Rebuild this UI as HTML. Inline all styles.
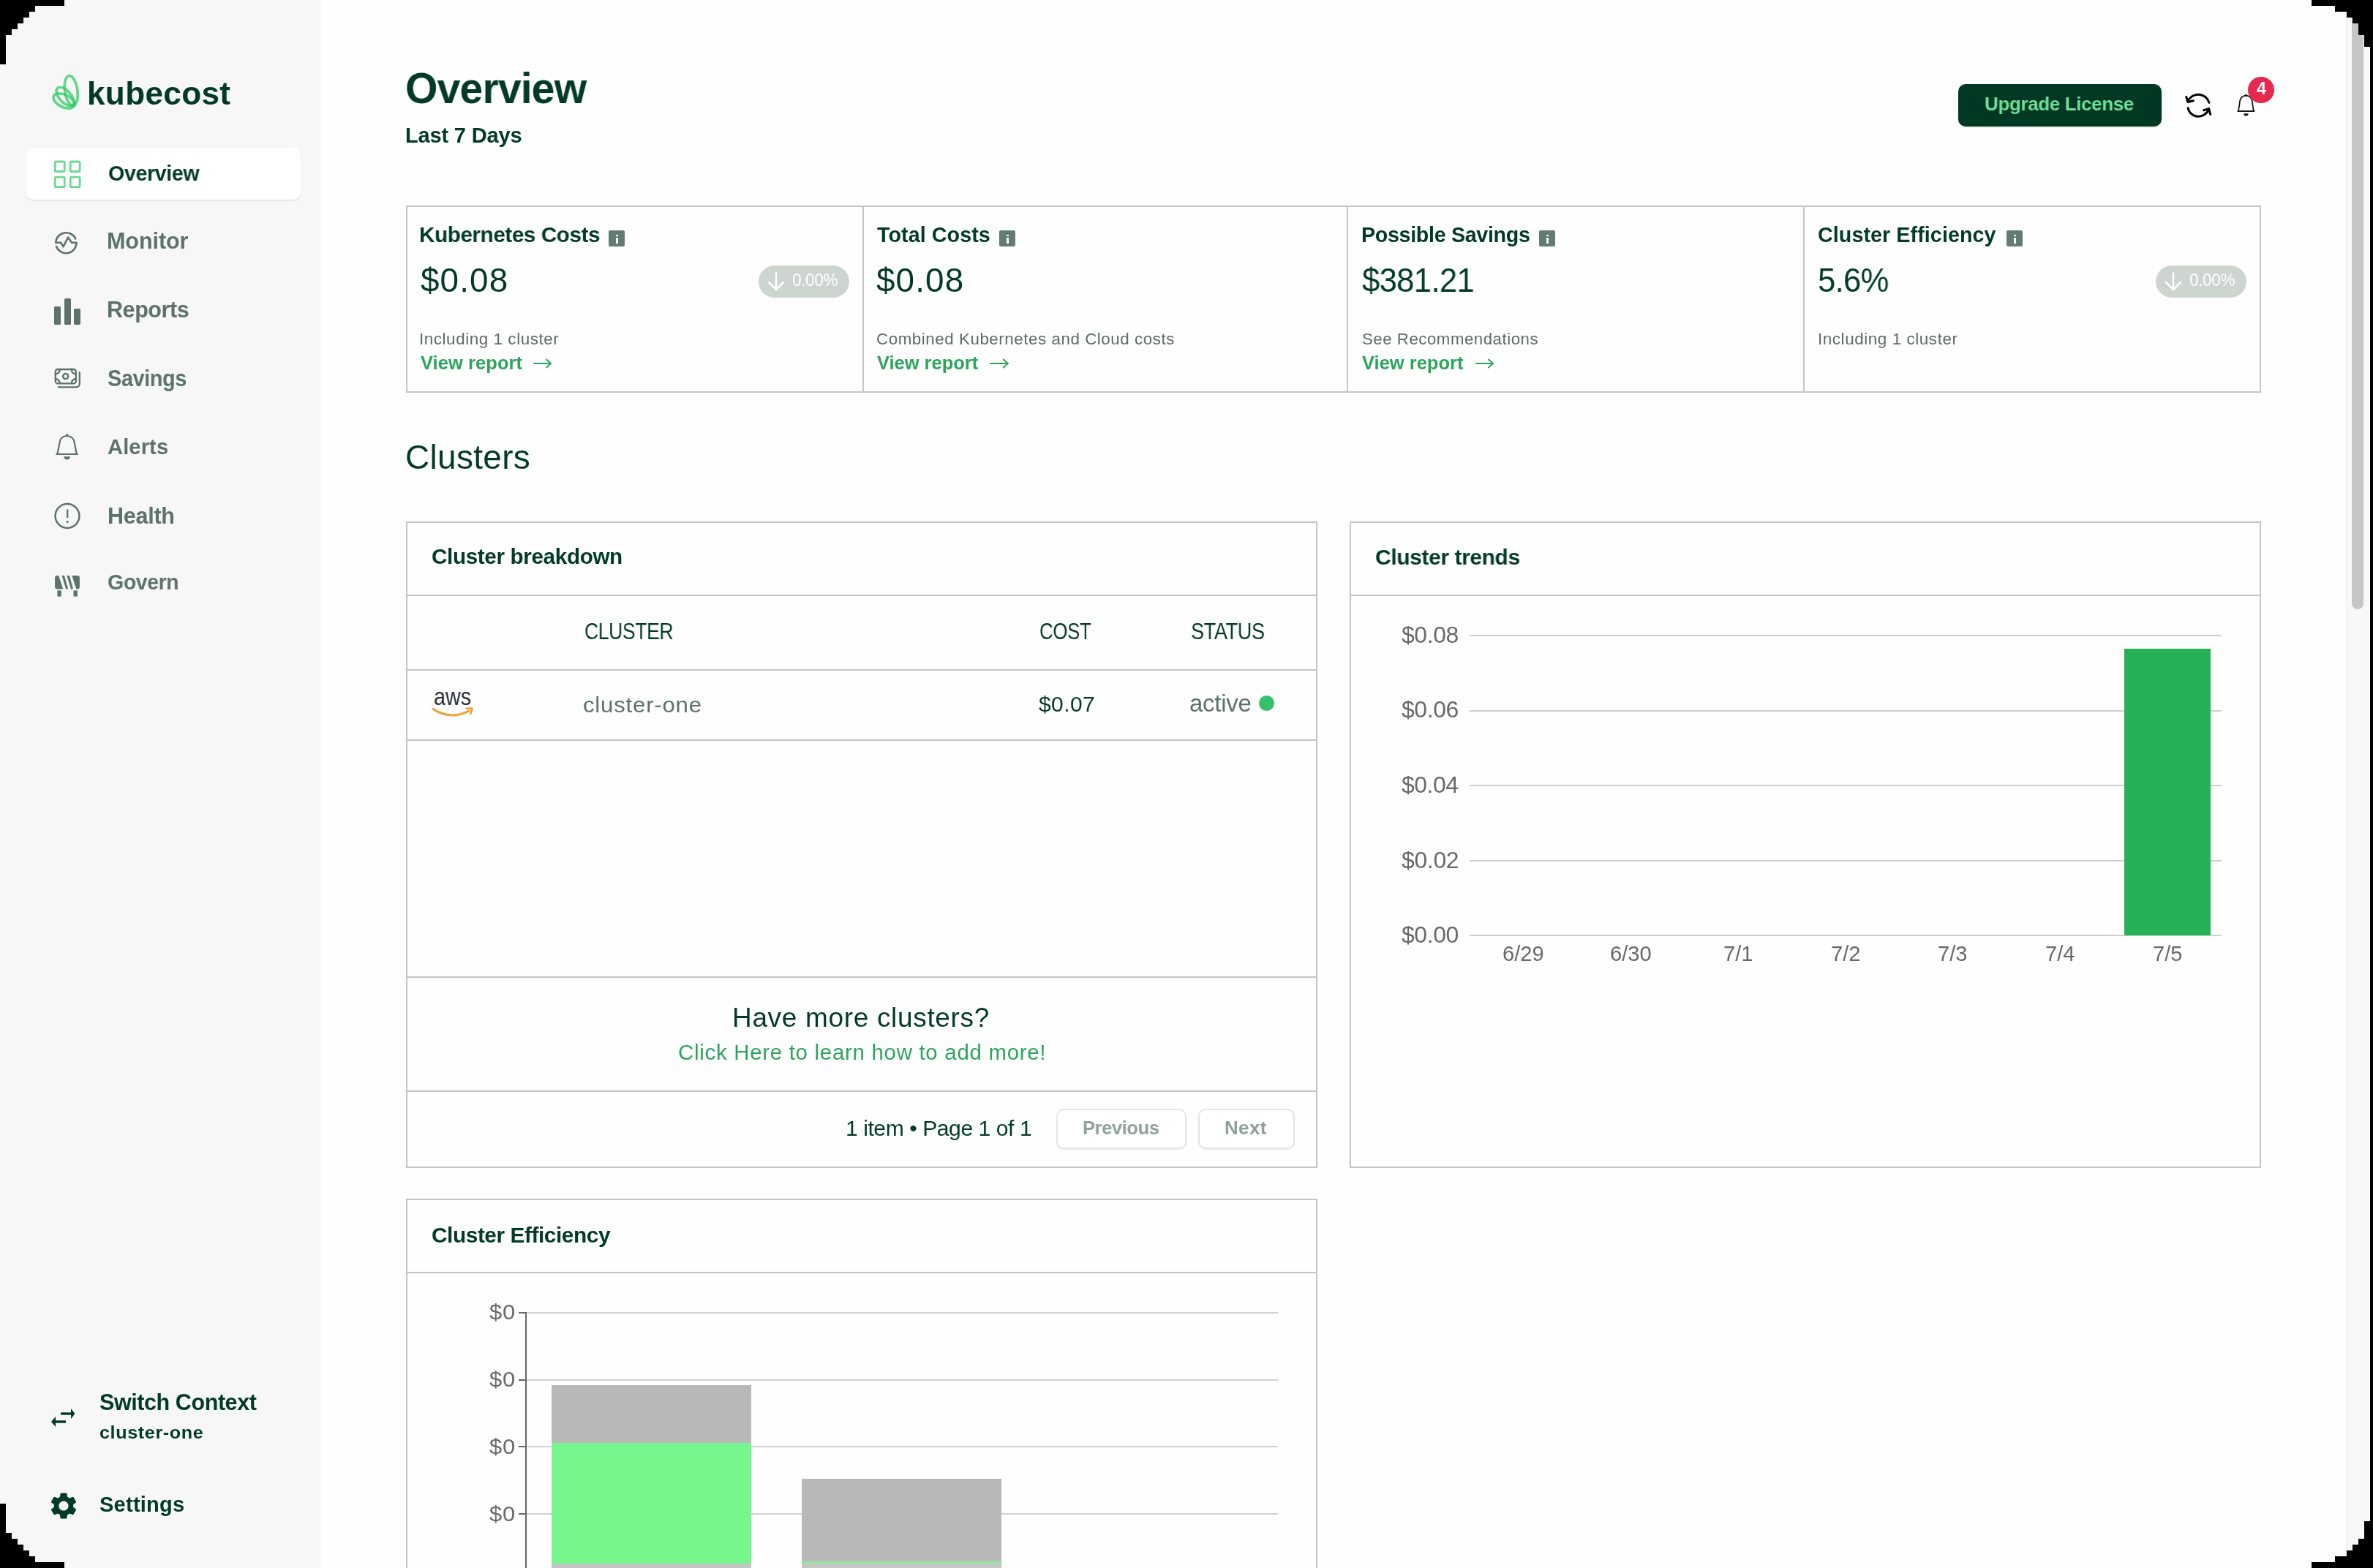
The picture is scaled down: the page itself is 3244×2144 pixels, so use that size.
<!DOCTYPE html>
<html><head><meta charset="utf-8"><title>Kubecost Overview</title>
<style>
html,body{margin:0;padding:0;}
body{width:3244px;height:2144px;position:relative;overflow:hidden;background:#fefefe;font-family:"Liberation Sans",sans-serif;}
.a{position:absolute;}
.t{position:absolute;white-space:pre;font-family:"Liberation Sans",sans-serif;will-change:transform;}
</style></head><body>
<div class="a" style="left:0px;top:0px;width:437px;height:2144px;background:#f8f7f7"></div>
<div class="a" style="left:436px;top:0px;width:4px;height:2144px;background:#fbfafa"></div>
<svg class="a" style="left:66px;top:96px" width="50" height="60" viewBox="0 0 50 60">
<g fill="none" stroke="#30cc62" stroke-opacity="0.74" stroke-width="3.7">
<ellipse cx="31.3" cy="28" rx="8.6" ry="20.6" transform="rotate(-8 31.3 28)"/>
<ellipse cx="23" cy="36" rx="15.5" ry="8" transform="rotate(48 23 36)"/>
<ellipse cx="21.5" cy="42" rx="15.5" ry="8.5" transform="rotate(25 21.5 42)"/>
</g></svg>
<span class="t" style="left:119.00px;top:106.24px;font-size:44.14px;line-height:44.14px;font-weight:700;color:#023a28;letter-spacing:0.321px;">kubecost</span>
<div class="a" style="left:35px;top:202px;width:376px;height:71px;background:#fff;border-radius:10px;box-shadow:0 2px 2px rgba(0,0,0,0.07),0 0 1px rgba(0,0,0,0.08)"></div>
<svg class="a" style="left:72px;top:218px" width="40" height="40" viewBox="0 0 40 40">
<g fill="none" stroke="#6fd794" stroke-width="2.8">
<rect x="3.2" y="3" width="13" height="13.5" rx="1.5"/><rect x="24.2" y="3" width="13" height="13.5" rx="1.5"/>
<rect x="3.2" y="24.2" width="13" height="13.5" rx="1.5"/><rect x="24.2" y="24.2" width="13" height="13.5" rx="1.5"/>
</g></svg>
<span class="t" style="left:147.77px;top:222.97px;font-size:29.09px;line-height:29.09px;font-weight:700;color:#023a28;letter-spacing:-0.436px;transform:scaleX(0.9864);transform-origin:0 0;">Overview</span>
<svg class="a" style="left:70px;top:312px" width="42" height="42" viewBox="0 0 42 42">
<path d="M33.3 14.5 A14.2 14.2 0 0 0 6.2 19.8 L13 19.8 L16.6 25.2 L23 12.6 L28 19.8 L34.5 19.8 A14.2 14.2 0 0 1 7 25" fill="none" stroke="#5c726b" stroke-width="2.6" stroke-linejoin="round" stroke-linecap="round"/>
</svg>
<span class="t" style="left:146.00px;top:313.74px;font-size:30.55px;line-height:30.55px;font-weight:700;color:#5c726b;letter-spacing:-0.083px;">Monitor</span>
<svg class="a" style="left:70px;top:404px" width="44" height="44" viewBox="0 0 44 44">
<g fill="#5c726b"><rect x="4" y="15" width="9" height="25" rx="1.5"/><rect x="18" y="4" width="9" height="36" rx="1.5"/><rect x="31" y="18" width="9" height="22" rx="1.5"/></g>
</svg>
<span class="t" style="left:146.00px;top:407.74px;font-size:30.55px;line-height:30.55px;font-weight:700;color:#5c726b;letter-spacing:-0.458px;transform:scaleX(0.9977);transform-origin:0 0;">Reports</span>
<svg class="a" style="left:70px;top:498px" width="44" height="36" viewBox="0 0 44 36">
<g fill="none" stroke="#5c726b" stroke-width="2.3" stroke-linecap="round">
<rect x="5.8" y="7" width="28" height="19.4" rx="3"/>
<path d="M5.8 13.5 A6 6 0 0 0 11.8 7"/><path d="M27.8 7 A6 6 0 0 0 33.8 13.5"/>
<path d="M5.8 20 A6.2 6.2 0 0 1 11.8 26.4"/><path d="M27.6 26.4 A6.2 6.2 0 0 1 33.8 20"/>
<circle cx="19.7" cy="16.6" r="3.6"/>
<path d="M38.8 11.2 V27 A4.3 4.3 0 0 1 34.5 31.3 H9.8"/>
</g></svg>
<span class="t" style="left:147.05px;top:501.74px;font-size:30.55px;line-height:30.55px;font-weight:700;color:#5c726b;letter-spacing:-0.458px;transform:scaleX(0.9464);transform-origin:0 0;">Savings</span>
<svg class="a" style="left:70px;top:588px" width="44" height="44" viewBox="0 0 44 44">
<g fill="none" stroke="#5c726b" stroke-width="2.2">
<path d="M8.4 33 C10 26 10.5 22 11.5 17 C12.5 11 16.5 8.2 21.6 8 C26.7 8.2 30.7 11 31.7 17 C32.7 22 33.2 26 34.8 33 Z"/>
<line x1="6.5" y1="33" x2="36.7" y2="33" stroke-width="2"/>
</g>
<circle cx="21.6" cy="7" r="1.8" fill="#5c726b"/>
<path d="M17.3 36.2 H26 A4.35 4.4 0 0 1 17.3 36.2 Z" fill="#5c726b"/>
</svg>
<span class="t" style="left:147.05px;top:596.97px;font-size:29.09px;line-height:29.09px;font-weight:700;color:#5c726b;letter-spacing:0.130px;">Alerts</span>
<svg class="a" style="left:70px;top:684px" width="44" height="44" viewBox="0 0 44 44">
<circle cx="22" cy="21.5" r="16.4" fill="none" stroke="#5c726b" stroke-width="2.5"/>
<line x1="22.2" y1="12.5" x2="22.2" y2="24" stroke="#5c726b" stroke-width="2.3"/>
<circle cx="22.2" cy="29.5" r="1.6" fill="#5c726b"/>
</svg>
<span class="t" style="left:146.60px;top:689.74px;font-size:30.55px;line-height:30.55px;font-weight:700;color:#5c726b;letter-spacing:-0.270px;">Health</span>
<svg class="a" style="left:70px;top:780px" width="44" height="40" viewBox="0 0 44 40">
<g fill="#5c726b">
<path d="M8 7.1 H10.2 L16.3 25.6 H8 A3 3 0 0 1 5.1 22.6 V10.1 A3 3 0 0 1 8 7.1 Z"/>
<path d="M14.5 7.1 H17.9 L23.2 25.6 H20.2 Z"/>
<path d="M21.4 7.1 H25 L30 25.6 H27 Z"/>
<path d="M28.3 7.1 H35.9 A3 3 0 0 1 38.9 10.1 V22.6 A3 3 0 0 1 35.9 25.6 H34.3 Z"/>
<rect x="8.4" y="27.4" width="5.4" height="8.2"/><rect x="30.5" y="27.4" width="5.4" height="8.2"/>
</g></svg>
<span class="t" style="left:147.37px;top:781.97px;font-size:29.09px;line-height:29.09px;font-weight:700;color:#5c726b;letter-spacing:-0.436px;transform:scaleX(0.9801);transform-origin:0 0;">Govern</span>
<svg class="a" style="left:66px;top:1920px" width="40" height="36" viewBox="0 0 40 36">
<g fill="#023a28">
<rect x="17" y="11.3" width="17" height="3.4"/><path d="M31 6 L36.5 13 L31 20 Z"/>
<rect x="10" y="22.3" width="14" height="3.4"/><path d="M10 17 L4 24 L10 31 Z"/>
</g></svg>
<span class="t" style="left:136.00px;top:1901.74px;font-size:30.55px;line-height:30.55px;font-weight:700;color:#023a28;letter-spacing:-0.442px;">Switch Context</span>
<span class="t" style="left:135.93px;top:1947.75px;font-size:23.45px;line-height:23.45px;font-weight:700;color:#023a28;letter-spacing:0.586px;transform:scaleX(1.0719);transform-origin:0 0;">cluster-one</span>
<svg class="a" style="left:64.5px;top:2036.5px" width="44" height="44" viewBox="0 0 24 24">
<path fill="#023a28" d="M19.14 12.94c.04-.3.06-.61.06-.94 0-.32-.02-.64-.07-.94l2.03-1.58c.18-.14.23-.41.12-.61l-1.92-3.32c-.12-.22-.37-.29-.59-.22l-2.39.96c-.5-.38-1.03-.7-1.62-.94l-.36-2.54c-.04-.24-.24-.41-.48-.41h-3.84c-.24 0-.43.17-.47.41l-.36 2.54c-.59.24-1.13.57-1.62.94l-2.39-.96c-.22-.08-.47 0-.59.22L2.74 8.87c-.12.21-.08.47.12.61l2.03 1.58c-.05.3-.09.63-.09.94s.02.64.07.94l-2.03 1.58c-.18.14-.23.41-.12.61l1.92 3.32c.12.22.37.29.59.22l2.39-.96c.5.38 1.03.7 1.62.94l.36 2.54c.05.24.24.41.48.41h3.84c.24 0 .44-.17.47-.41l.36-2.54c.59-.24 1.13-.56 1.62-.94l2.39.96c.22.08.47 0 .59-.22l1.92-3.32c.12-.22.07-.47-.12-.61l-2.01-1.58zM12 15.6c-1.98 0-3.6-1.62-3.6-3.6s1.62-3.6 3.6-3.6 3.6 1.62 3.6 3.6-1.62 3.6-3.6 3.6z"/>
</svg>
<span class="t" style="left:136.25px;top:2042.97px;font-size:29.09px;line-height:29.09px;font-weight:700;color:#023a28;letter-spacing:0.214px;">Settings</span>
<span class="t" style="left:554.47px;top:91.86px;font-size:58.76px;line-height:58.76px;font-weight:700;color:#023a28;letter-spacing:-0.881px;transform:scaleX(0.9724);transform-origin:0 0;">Overview</span>
<span class="t" style="left:554.00px;top:170.97px;font-size:29.09px;line-height:29.09px;font-weight:700;color:#023a28;letter-spacing:-0.200px;">Last 7 Days</span>
<div class="a" style="left:2677px;top:115px;width:278px;height:58px;background:#003823;border-radius:10px;box-shadow:0 2px 2px rgba(0,0,0,0.08)"></div>
<span class="t" style="left:2713.03px;top:128.99px;font-size:26.47px;line-height:26.47px;font-weight:700;color:#6fe096;letter-spacing:-0.397px;transform:scaleX(0.9833);transform-origin:0 0;">Upgrade License</span>
<svg class="a" style="left:2980px;top:118px" width="50" height="50" viewBox="0 0 50 50">
<g fill="none" stroke="#000" stroke-width="3" stroke-linecap="round" stroke-linejoin="round">
<path d="M39.9 22.3 A15.4 15.4 0 0 0 10.9 20.6"/><path d="M8.8 14.5 L10.8 21.5 L18.3 19.7"/>
<path d="M11.1 29.7 A14.6 14.6 0 0 0 39.4 30.8"/><path d="M41.7 38.3 L39.6 30.6 L32.5 32.8"/>
</g></svg>
<svg class="a" style="left:3054px;top:124px" width="34" height="38" viewBox="0 0 34 38">
<g fill="none" stroke="#111" stroke-width="1.7">
<path d="M5.8 28 C7.2 22.5 7.4 18.5 8 14.5 C8.8 9.5 12.2 6.8 16.4 6.6 C20.6 6.8 24 9.5 24.8 14.5 C25.4 18.5 25.6 22.5 27 28 Z"/>
<line x1="4.5" y1="28" x2="28.3" y2="28"/></g>
<circle cx="16.4" cy="6.2" r="1.5" fill="#111"/>
<path d="M13.2 31.2 H19.6 A3.2 3.2 0 0 1 13.2 31.2 Z" fill="#111"/>
</svg>
<div class="a" style="left:3073px;top:105px;width:36px;height:36px;background:#e8294f;border-radius:50%"></div>
<span class="t" style="left:3085.35px;top:109.90px;font-size:23.27px;line-height:23.27px;font-weight:700;color:#fff;letter-spacing:0.000px;">4</span>
<div class="a" style="left:555px;top:281px;width:2536px;height:256px;border:2px solid #c3c6c4;box-sizing:border-box"></div>
<div class="a" style="left:1179px;top:281px;width:2px;height:256px;background:#c3c6c4"></div>
<div class="a" style="left:1841px;top:281px;width:2px;height:256px;background:#c3c6c4"></div>
<div class="a" style="left:2465px;top:281px;width:2px;height:256px;background:#c3c6c4"></div>
<span class="t" style="left:573.02px;top:305.84px;font-size:29.96px;line-height:29.96px;font-weight:700;color:#023a28;letter-spacing:-0.449px;transform:scaleX(0.9913);transform-origin:0 0;">Kubernetes Costs</span>
<div class="a" style="left:832px;top:314.5px;width:22px;height:22px;background:#637b73;border-radius:2px"></div>
<div class="a" style="left:842px;top:320.5px;width:3px;height:2.6px;background:#fff"></div>
<div class="a" style="left:842px;top:324.5px;width:3px;height:8px;background:#fff"></div>
<span class="t" style="left:574.50px;top:360.83px;font-size:45.80px;line-height:45.80px;font-weight:400;color:#023a28;letter-spacing:1.145px;">$0.08</span>
<div class="a" style="left:1037px;top:363px;width:124px;height:44px;background:#cdd5d1;border-radius:22px"></div>
<svg class="a" style="left:1047px;top:369px" width="28" height="32" viewBox="0 0 28 32">
<g fill="none" stroke="#fff" stroke-width="2.6" stroke-linecap="round" stroke-linejoin="round"><path d="M14 4.5 V27"/><path d="M4 17 L14 27 L24 17"/></g></svg>
<span class="t" style="left:1083.09px;top:370.67px;font-size:24.73px;line-height:24.73px;font-weight:400;color:#fff;letter-spacing:-0.371px;transform:scaleX(0.9102);transform-origin:0 0;">0.00%</span>
<span class="t" style="left:572.97px;top:452.88px;font-size:22.11px;line-height:22.11px;font-weight:400;color:#5f6a66;letter-spacing:0.553px;transform:scaleX(1.0138);transform-origin:0 0;">Including 1 cluster</span>
<span class="t" style="left:574.75px;top:484.05px;font-size:25.45px;line-height:25.45px;font-weight:700;color:#2ca55c;letter-spacing:0.100px;">View report</span>
<svg class="a" style="left:729px;top:489px" width="26" height="16" viewBox="0 0 26 16">
<g fill="none" stroke="#2ca55c" stroke-width="1.9" stroke-linecap="round" stroke-linejoin="round"><path d="M1 8 H24"/><path d="M18 2.5 L24 8 L18 13.5"/></g></svg>
<span class="t" style="left:1198.55px;top:307.04px;font-size:28.65px;line-height:28.65px;font-weight:700;color:#023a28;letter-spacing:0.090px;">Total Costs</span>
<div class="a" style="left:1366px;top:314.5px;width:22px;height:22px;background:#637b73;border-radius:2px"></div>
<div class="a" style="left:1376px;top:320.5px;width:3px;height:2.6px;background:#fff"></div>
<div class="a" style="left:1376px;top:324.5px;width:3px;height:8px;background:#fff"></div>
<span class="t" style="left:1198.30px;top:360.83px;font-size:45.80px;line-height:45.80px;font-weight:400;color:#023a28;letter-spacing:1.125px;">$0.08</span>
<span class="t" style="left:1197.79px;top:452.88px;font-size:22.11px;line-height:22.11px;font-weight:400;color:#5f6a66;letter-spacing:0.553px;transform:scaleX(1.0095);transform-origin:0 0;">Combined Kubernetes and Cloud costs</span>
<span class="t" style="left:1198.55px;top:484.05px;font-size:25.45px;line-height:25.45px;font-weight:700;color:#2ca55c;letter-spacing:0.010px;">View report</span>
<svg class="a" style="left:1352.7px;top:489px" width="26.799999999999955" height="16" viewBox="0 0 26.799999999999955 16">
<g fill="none" stroke="#2ca55c" stroke-width="1.9" stroke-linecap="round" stroke-linejoin="round"><path d="M1 8 H24.799999999999955"/><path d="M18.799999999999955 2.5 L24.799999999999955 8 L18.799999999999955 13.5"/></g></svg>
<span class="t" style="left:1860.50px;top:307.04px;font-size:28.65px;line-height:28.65px;font-weight:700;color:#023a28;letter-spacing:-0.317px;">Possible Savings</span>
<div class="a" style="left:2104.4px;top:314.5px;width:22px;height:22px;background:#637b73;border-radius:2px"></div>
<div class="a" style="left:2114.4px;top:320.5px;width:3px;height:2.6px;background:#fff"></div>
<div class="a" style="left:2114.4px;top:324.5px;width:3px;height:8px;background:#fff"></div>
<span class="t" style="left:1862.02px;top:360.83px;font-size:45.80px;line-height:45.80px;font-weight:400;color:#023a28;letter-spacing:-0.687px;transform:scaleX(0.9519);transform-origin:0 0;">$381.21</span>
<span class="t" style="left:1861.50px;top:452.88px;font-size:22.11px;line-height:22.11px;font-weight:400;color:#5f6a66;letter-spacing:0.553px;transform:scaleX(1.0032);transform-origin:0 0;">See Recommendations</span>
<span class="t" style="left:1862.25px;top:484.05px;font-size:25.45px;line-height:25.45px;font-weight:700;color:#2ca55c;letter-spacing:0.030px;">View report</span>
<svg class="a" style="left:2016.9px;top:489px" width="26.0" height="16" viewBox="0 0 26.0 16">
<g fill="none" stroke="#2ca55c" stroke-width="1.9" stroke-linecap="round" stroke-linejoin="round"><path d="M1 8 H24.0"/><path d="M18.0 2.5 L24.0 8 L18.0 13.5"/></g></svg>
<span class="t" style="left:2485.35px;top:307.04px;font-size:28.65px;line-height:28.65px;font-weight:700;color:#023a28;letter-spacing:0.091px;">Cluster Efficiency</span>
<div class="a" style="left:2742.7px;top:314.5px;width:22px;height:22px;background:#637b73;border-radius:2px"></div>
<div class="a" style="left:2752.7px;top:320.5px;width:3px;height:2.6px;background:#fff"></div>
<div class="a" style="left:2752.7px;top:324.5px;width:3px;height:8px;background:#fff"></div>
<span class="t" style="left:2484.93px;top:360.83px;font-size:45.80px;line-height:45.80px;font-weight:400;color:#023a28;letter-spacing:-0.687px;transform:scaleX(0.9525);transform-origin:0 0;">5.6%</span>
<div class="a" style="left:2947px;top:363px;width:124px;height:44px;background:#cdd5d1;border-radius:22px"></div>
<svg class="a" style="left:2957px;top:369px" width="28" height="32" viewBox="0 0 28 32">
<g fill="none" stroke="#fff" stroke-width="2.6" stroke-linecap="round" stroke-linejoin="round"><path d="M14 4.5 V27"/><path d="M4 17 L14 27 L24 17"/></g></svg>
<span class="t" style="left:2993.09px;top:370.67px;font-size:24.73px;line-height:24.73px;font-weight:400;color:#fff;letter-spacing:-0.371px;transform:scaleX(0.9102);transform-origin:0 0;">0.00%</span>
<span class="t" style="left:2484.57px;top:452.88px;font-size:22.11px;line-height:22.11px;font-weight:400;color:#5f6a66;letter-spacing:0.553px;transform:scaleX(1.0149);transform-origin:0 0;">Including 1 cluster</span>
<span class="t" style="left:553.75px;top:603.29px;font-size:45.96px;line-height:45.96px;font-weight:400;color:#023a28;letter-spacing:0.321px;">Clusters</span>
<div class="a" style="left:555px;top:713px;width:1246px;height:884px;border:2px solid #c3c6c4;box-sizing:border-box"></div>
<div class="a" style="left:555px;top:813px;width:1246px;height:2px;background:#c3c6c4"></div>
<div class="a" style="left:555px;top:915px;width:1246px;height:2px;background:#c3c6c4"></div>
<div class="a" style="left:555px;top:1011px;width:1246px;height:2px;background:#c0c8c4"></div>
<div class="a" style="left:555px;top:1335px;width:1246px;height:2px;background:#c3c6c4"></div>
<div class="a" style="left:555px;top:1491px;width:1246px;height:2px;background:#c3c6c4"></div>
<span class="t" style="left:589.75px;top:746.48px;font-size:29.67px;line-height:29.67px;font-weight:700;color:#023a28;letter-spacing:-0.359px;">Cluster breakdown</span>
<span class="t" style="left:798.72px;top:847.65px;font-size:31.13px;line-height:31.13px;font-weight:400;color:#023a28;letter-spacing:-0.467px;transform:scaleX(0.8532);transform-origin:0 0;">CLUSTER</span>
<span class="t" style="left:1420.75px;top:847.65px;font-size:31.13px;line-height:31.13px;font-weight:400;color:#023a28;letter-spacing:-0.467px;transform:scaleX(0.8326);transform-origin:0 0;">COST</span>
<span class="t" style="left:1627.69px;top:847.65px;font-size:31.13px;line-height:31.13px;font-weight:400;color:#023a28;letter-spacing:-0.467px;transform:scaleX(0.8729);transform-origin:0 0;">STATUS</span>
<svg class="a" style="left:586px;top:940px" width="70" height="46" viewBox="0 0 70 46">
<text x="7" y="23.6" font-family="Liberation Sans" font-size="33" fill="#2f333b" textLength="51" lengthAdjust="spacingAndGlyphs">aws</text>
<path d="M6 29.5 Q30 45 54.6 32.4" fill="none" stroke="#f0a030" stroke-width="3" stroke-linecap="round"/>
<path d="M51.6 28.8 L59.5 28.6 L57.2 36" fill="none" stroke="#f0a030" stroke-width="2.6" stroke-linecap="round" stroke-linejoin="round"/>
</svg>
<span class="t" style="left:797.47px;top:948.73px;font-size:29.38px;line-height:29.38px;font-weight:400;color:#5c726b;letter-spacing:0.734px;transform:scaleX(1.0618);transform-origin:0 0;">cluster-one</span>
<span class="t" style="left:1419.75px;top:948.16px;font-size:30.05px;line-height:30.05px;font-weight:400;color:#023a28;letter-spacing:0.375px;">$0.07</span>
<span class="t" style="left:1626.40px;top:945.75px;font-size:32.90px;line-height:32.90px;font-weight:400;color:#5c726b;letter-spacing:-0.230px;">active</span>
<div class="a" style="left:1721px;top:951px;width:21px;height:21px;background:#35c06a;border-radius:50%"></div>
<span class="t" style="left:1000.70px;top:1374.33px;font-size:36.95px;line-height:36.95px;font-weight:400;color:#023a28;letter-spacing:0.700px;">Have more clusters?</span>
<span class="t" style="left:927.48px;top:1424.97px;font-size:29.09px;line-height:29.09px;font-weight:400;color:#2ca55c;letter-spacing:0.727px;transform:scaleX(1.0103);transform-origin:0 0;">Click Here to learn how to add more!</span>
<span class="t" style="left:1155.75px;top:1527.81px;font-size:30.11px;line-height:30.11px;font-weight:400;color:#023a28;letter-spacing:-0.452px;">1 item • Page 1 of 1</span>
<div class="a" style="left:1444px;top:1516px;width:178px;height:55px;border:2px solid #e3e6e4;border-radius:10px;box-sizing:border-box;box-shadow:0 2px 2px rgba(0,0,0,0.05);background:#fff"></div>
<span class="t" style="left:1480.28px;top:1529.98px;font-size:25.89px;line-height:25.89px;font-weight:700;color:#8fa09a;letter-spacing:-0.388px;transform:scaleX(0.9848);transform-origin:0 0;">Previous</span>
<div class="a" style="left:1638px;top:1516px;width:132px;height:55px;border:2px solid #e3e6e4;border-radius:10px;box-sizing:border-box;box-shadow:0 2px 2px rgba(0,0,0,0.05);background:#fff"></div>
<span class="t" style="left:1674.25px;top:1529.98px;font-size:25.89px;line-height:25.89px;font-weight:700;color:#8fa09a;letter-spacing:0.417px;">Next</span>
<div class="a" style="left:1845px;top:713px;width:1246px;height:884px;border:2px solid #c3c6c4;box-sizing:border-box"></div>
<div class="a" style="left:1845px;top:813px;width:1246px;height:2px;background:#c3c6c4"></div>
<span class="t" style="left:1880.36px;top:746.17px;font-size:30.40px;line-height:30.40px;font-weight:700;color:#023a28;letter-spacing:-0.456px;transform:scaleX(0.9903);transform-origin:0 0;">Cluster trends</span>
<div class="a" style="left:2009px;top:868px;width:1028px;height:2px;background:#cfd0d0"></div>
<span class="t" style="left:1916.25px;top:852.88px;font-size:31.91px;line-height:31.91px;font-weight:400;color:#666a68;letter-spacing:-0.375px;">$0.08</span>
<div class="a" style="left:2009px;top:971px;width:1028px;height:2px;background:#cfd0d0"></div>
<span class="t" style="left:1916.25px;top:955.48px;font-size:31.91px;line-height:31.91px;font-weight:400;color:#666a68;letter-spacing:-0.375px;">$0.06</span>
<div class="a" style="left:2009px;top:1073px;width:1028px;height:2px;background:#cfd0d0"></div>
<span class="t" style="left:1916.25px;top:1058.08px;font-size:31.91px;line-height:31.91px;font-weight:400;color:#666a68;letter-spacing:-0.479px;transform:scaleX(0.9989);transform-origin:0 0;">$0.04</span>
<div class="a" style="left:2009px;top:1176px;width:1028px;height:2px;background:#cfd0d0"></div>
<span class="t" style="left:1916.25px;top:1160.58px;font-size:31.91px;line-height:31.91px;font-weight:400;color:#666a68;letter-spacing:-0.312px;">$0.02</span>
<div class="a" style="left:2009px;top:1278px;width:1028px;height:2px;background:#cfd0d0"></div>
<span class="t" style="left:1916.25px;top:1263.18px;font-size:31.91px;line-height:31.91px;font-weight:400;color:#666a68;letter-spacing:-0.375px;">$0.00</span>
<div class="a" style="left:2904px;top:887px;width:117.5px;height:392.3px;background:#27b157"></div>
<span class="t" style="left:2054.15px;top:1289.71px;font-size:29.05px;line-height:29.05px;font-weight:400;color:#666a68;letter-spacing:0.000px;">6/29</span>
<span class="t" style="left:2200.89px;top:1289.71px;font-size:29.05px;line-height:29.05px;font-weight:400;color:#666a68;letter-spacing:0.000px;">6/30</span>
<span class="t" style="left:2355.87px;top:1289.71px;font-size:29.05px;line-height:29.05px;font-weight:400;color:#666a68;letter-spacing:0.000px;">7/1</span>
<span class="t" style="left:2502.73px;top:1289.71px;font-size:29.05px;line-height:29.05px;font-weight:400;color:#666a68;letter-spacing:0.000px;">7/2</span>
<span class="t" style="left:2649.47px;top:1289.71px;font-size:29.05px;line-height:29.05px;font-weight:400;color:#666a68;letter-spacing:0.000px;">7/3</span>
<span class="t" style="left:2796.20px;top:1289.71px;font-size:29.05px;line-height:29.05px;font-weight:400;color:#666a68;letter-spacing:0.000px;">7/4</span>
<span class="t" style="left:2943.19px;top:1289.71px;font-size:29.05px;line-height:29.05px;font-weight:400;color:#666a68;letter-spacing:0.000px;">7/5</span>
<div class="a" style="left:555px;top:1639px;width:1246px;height:600px;border:2px solid #c3c6c4;box-sizing:border-box"></div>
<div class="a" style="left:555px;top:1739px;width:1246px;height:2px;background:#c3c6c4"></div>
<span class="t" style="left:590.15px;top:1674.36px;font-size:29.82px;line-height:29.82px;font-weight:700;color:#023a28;letter-spacing:-0.432px;">Cluster Efficiency</span>
<div class="a" style="left:719px;top:1794px;width:1028px;height:2px;background:#cfd0d0"></div>
<div class="a" style="left:709px;top:1794px;width:10px;height:2px;background:#666"></div>
<span class="t" style="left:669.03px;top:1780.37px;font-size:28.62px;line-height:28.62px;font-weight:400;color:#666a68;letter-spacing:0.716px;transform:scaleX(1.0818);transform-origin:0 0;">$0</span>
<div class="a" style="left:719px;top:1886px;width:1028px;height:2px;background:#cfd0d0"></div>
<div class="a" style="left:709px;top:1886px;width:10px;height:2px;background:#666"></div>
<span class="t" style="left:669.03px;top:1872.27px;font-size:28.62px;line-height:28.62px;font-weight:400;color:#666a68;letter-spacing:0.716px;transform:scaleX(1.0818);transform-origin:0 0;">$0</span>
<div class="a" style="left:719px;top:1977px;width:1028px;height:2px;background:#cfd0d0"></div>
<div class="a" style="left:709px;top:1977px;width:10px;height:2px;background:#666"></div>
<span class="t" style="left:669.03px;top:1964.07px;font-size:28.62px;line-height:28.62px;font-weight:400;color:#666a68;letter-spacing:0.716px;transform:scaleX(1.0818);transform-origin:0 0;">$0</span>
<div class="a" style="left:719px;top:2069px;width:1028px;height:2px;background:#cfd0d0"></div>
<div class="a" style="left:709px;top:2069px;width:10px;height:2px;background:#666"></div>
<span class="t" style="left:669.03px;top:2055.77px;font-size:28.62px;line-height:28.62px;font-weight:400;color:#666a68;letter-spacing:0.716px;transform:scaleX(1.0818);transform-origin:0 0;">$0</span>
<div class="a" style="left:718px;top:1794px;width:2px;height:360px;background:#666"></div>
<div class="a" style="left:753.5px;top:1894px;width:273px;height:78.5px;background:#b8b8b8"></div>
<div class="a" style="left:753.5px;top:1972.5px;width:273px;height:200px;background:#78f68e"></div>
<div class="a" style="left:1096px;top:2022px;width:273px;height:113px;background:#b8b8b8"></div>
<div class="a" style="left:1096px;top:2134.6px;width:273px;height:3.5px;background:#90e8a0"></div>
<div class="a" style="left:753.5px;top:2138px;width:273px;height:6px;background:#c4c6c4"></div>
<div class="a" style="left:1096px;top:2138px;width:273px;height:6px;background:#c6c6c4"></div>
<div class="a" style="left:3207px;top:0px;width:33px;height:2144px;background:#f8f7f9;border-left:1px solid #ebeaec;box-sizing:border-box"></div>
<div class="a" style="left:3215px;top:-10px;width:16px;height:843px;background:#c7c5c8;border-radius:8px"></div>
<div class="a" style="left:3240px;top:0px;width:4px;height:2144px;background:#000"></div>
<div class="a" style="left:0px;top:0px;width:88px;height:8px;background:#000"></div>
<div class="a" style="left:0px;top:8px;width:48px;height:8px;background:#000"></div>
<div class="a" style="left:0px;top:16px;width:40px;height:8px;background:#000"></div>
<div class="a" style="left:0px;top:24px;width:32px;height:8px;background:#000"></div>
<div class="a" style="left:0px;top:32px;width:24px;height:8px;background:#000"></div>
<div class="a" style="left:0px;top:40px;width:16px;height:8px;background:#000"></div>
<div class="a" style="left:0px;top:48px;width:8px;height:40px;background:#000"></div>
<div class="a" style="left:0px;top:2056px;width:8px;height:40px;background:#000"></div>
<div class="a" style="left:0px;top:2096px;width:16px;height:8px;background:#000"></div>
<div class="a" style="left:0px;top:2104px;width:24px;height:8px;background:#000"></div>
<div class="a" style="left:0px;top:2112px;width:32px;height:8px;background:#000"></div>
<div class="a" style="left:0px;top:2120px;width:40px;height:8px;background:#000"></div>
<div class="a" style="left:0px;top:2128px;width:48px;height:8px;background:#000"></div>
<div class="a" style="left:0px;top:2136px;width:88px;height:8px;background:#000"></div>
<div class="a" style="left:3160px;top:0px;width:84px;height:8px;background:#000"></div>
<div class="a" style="left:3192px;top:8px;width:52px;height:8px;background:#000"></div>
<div class="a" style="left:3208px;top:16px;width:36px;height:8px;background:#000"></div>
<div class="a" style="left:3216px;top:24px;width:28px;height:8px;background:#000"></div>
<div class="a" style="left:3224px;top:32px;width:20px;height:16px;background:#000"></div>
<div class="a" style="left:3232px;top:48px;width:12px;height:16px;background:#000"></div>
<div class="a" style="left:3232px;top:2080px;width:12px;height:24px;background:#000"></div>
<div class="a" style="left:3224px;top:2104px;width:20px;height:8px;background:#000"></div>
<div class="a" style="left:3216px;top:2112px;width:28px;height:8px;background:#000"></div>
<div class="a" style="left:3208px;top:2120px;width:36px;height:8px;background:#000"></div>
<div class="a" style="left:3192px;top:2128px;width:52px;height:8px;background:#000"></div>
<div class="a" style="left:3160px;top:2136px;width:84px;height:8px;background:#000"></div>
</body></html>
